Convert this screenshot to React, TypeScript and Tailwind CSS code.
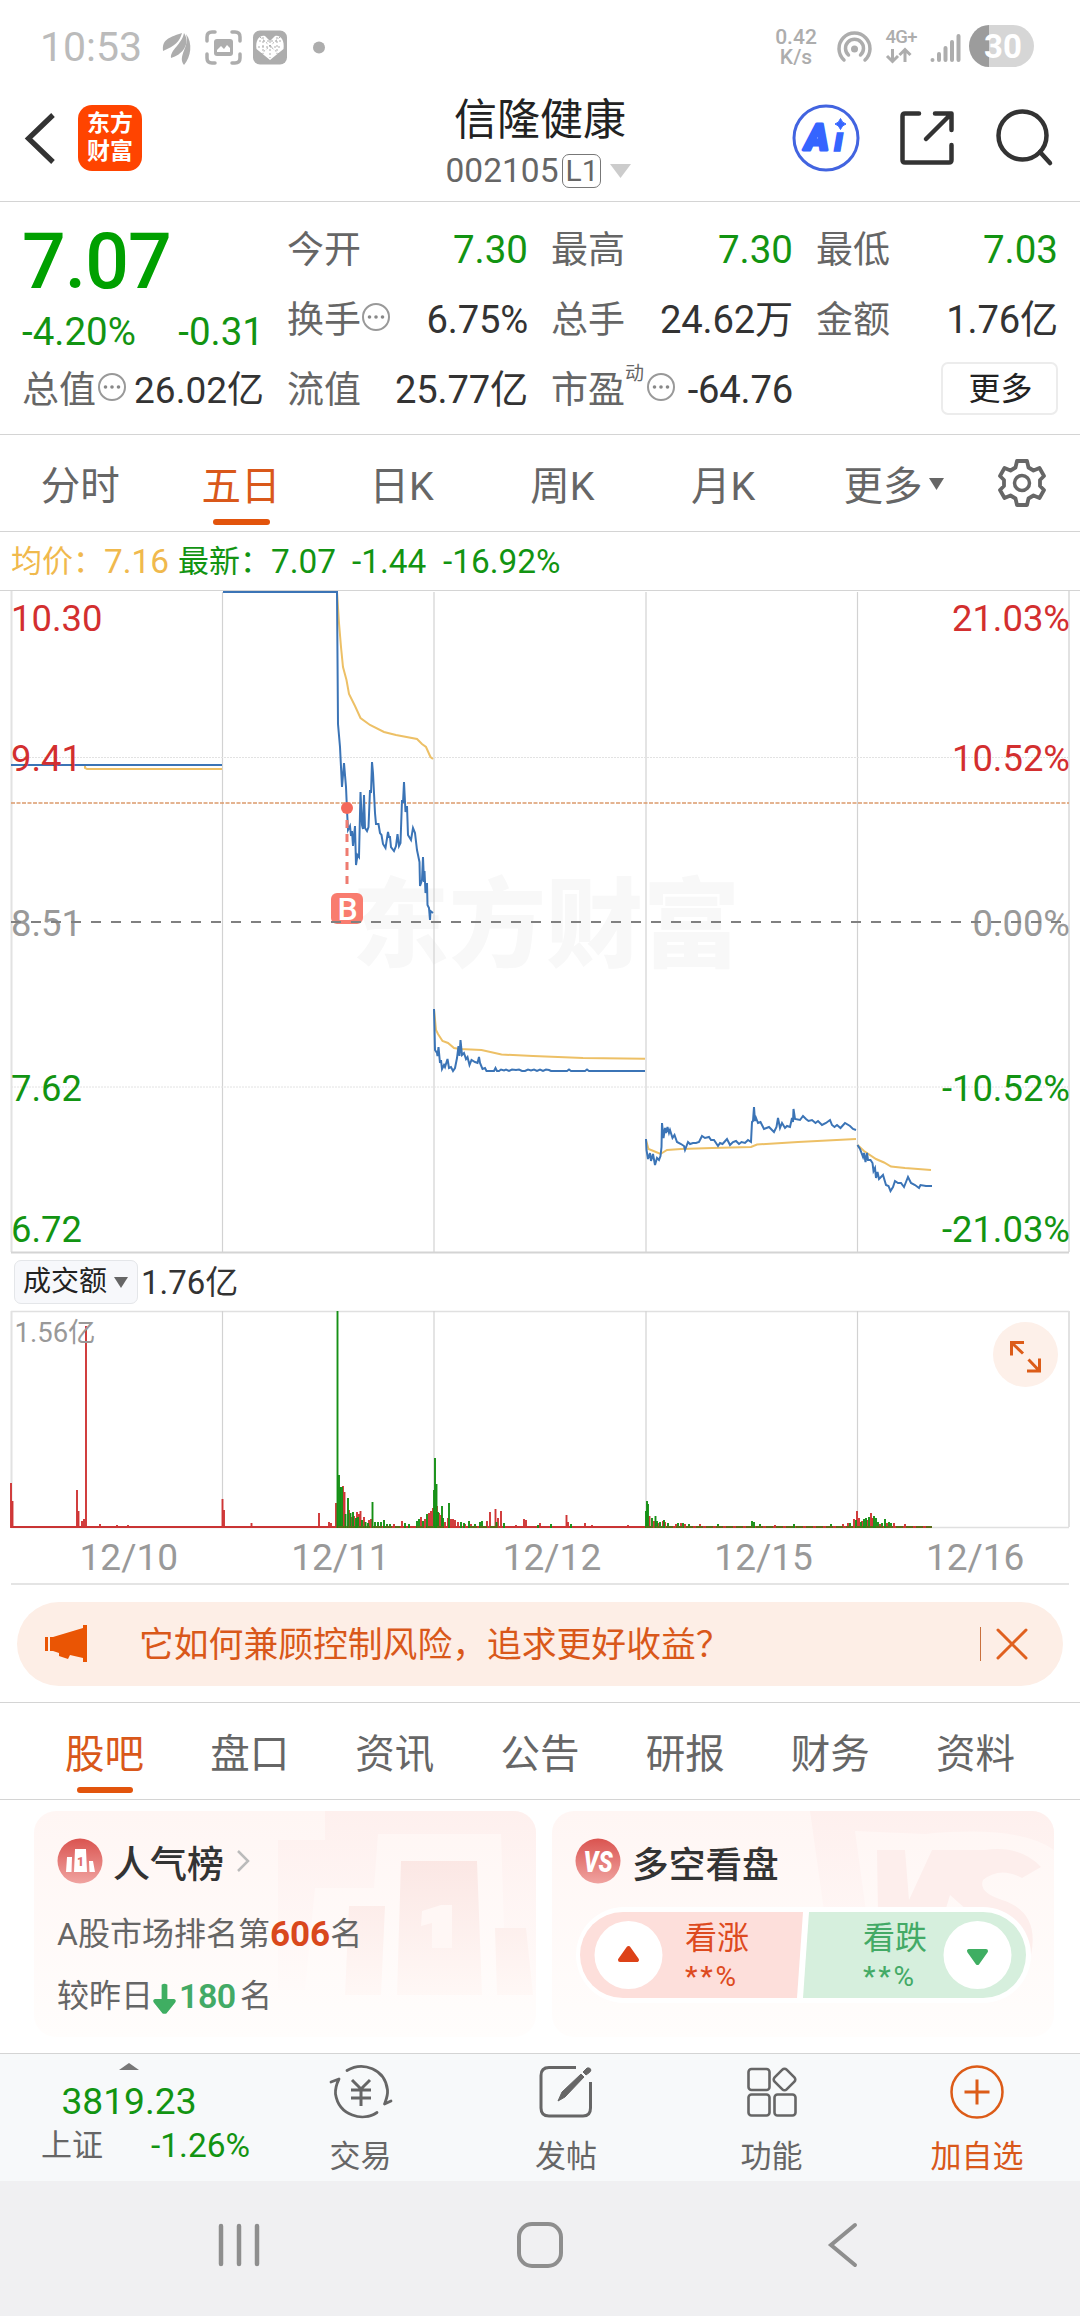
import { Fragment } from "react";

const priceLines = [
  "M11 765H222",
  "M223 592H337L338 724L340 747L342 787L344 763L346 787L347 810L348 830L350 826L351 836L352 831L353 846L355 826L356 865L357.5 855L359 857L360.5 792L362 825L363 829L364 795L365 828L367 831L368.5 827L370 790L371 793L372 762L373 773L375 813L376 824L378.5 824L380 833L381.5 835L383 844L385.5 848L388 832L389 837L390 837L391 847L394 851L396 846L397.5 834L399 846L400.5 843L402 800L403 803L404 782L405.5 812L407 806L408 835L411 840L413 828L415 833L417 850L419.5 862L420 886L422 880L423 857L424 882L424.5 871L425.5 893L427 883L427.5 905L429 908L430 920L430.5 911L433 913",
  "M434 1009L435 1050L437 1053L437.5 1056L438.5 1047L440 1063L441 1060L442 1069L444 1065L445 1067L447.5 1059L449 1068L451 1067L453 1071L455 1068L457 1058L458.5 1046L459.5 1056L460.5 1040L462 1055L464 1053L466 1059L467.5 1057L469.5 1065L471.5 1060L475 1062L477.5 1063L479 1057L480 1063L482.5 1069L485 1068L486.5 1071H494L495.5 1068L497 1071H499L501 1069.5L504 1070.5L506 1069.5L509 1071L512 1069.5L516 1070L519 1069.5L522 1071H525L528 1069.5L531 1070.5L534 1069.5L537 1071L540 1069.5L543 1071L546 1069.5L549 1070L551 1071H567L569 1069.5L571 1071H585L587 1069.5L589 1071H645",
  "M646 1139L646.5 1150L648 1159L650 1153L651 1161L653 1154L655 1165L657 1158L659 1160L660.5 1156L661.5 1147L662 1123L663.5 1138L665 1128L666 1133L667.5 1127L669 1133L670 1130L672.5 1138L674.5 1135L677 1142L681 1144L684 1146L685 1150L688 1142L690 1144L693 1143L696 1143L699 1142L702 1136L705 1138L709 1137L711 1140L714 1140L718 1146L720 1143L722.5 1144L727 1139L730 1145L733 1142L736 1141L739 1144L741.5 1142L745 1143L748 1140L751 1142L752 1122L753 1121L754 1107L755 1121L756 1118L758 1123L760.5 1122L764 1129L769 1127L774 1132L776.5 1127L778 1118L780 1128L782 1123L785 1128L787 1126L790 1127L792 1118L793 1122L793.5 1109L795 1119L800 1120L803 1116L806 1119L808.5 1121L812 1120L815.5 1123L818 1121L822 1125L826 1123L830 1120L832 1125L834.5 1127L837 1125L840.5 1128L845 1123L850 1126L853 1129L856 1130",
  "M857.5 1145L860 1149L863 1157L864 1153L865.5 1162L867 1153L868 1160L870.5 1160L872.5 1163L873.5 1171L875 1168L876 1178L877.5 1172L879 1179L881 1177L883 1175L886 1185L888.5 1186L890.5 1191L893 1187L895 1181L898 1183L901 1183L904 1187L906 1182L908 1177L911 1183L915 1185L919 1188L920.5 1185L926 1186H932",
];

const avgLines = [
  "M85 765V768L87 769H222",
  "M337 592L339 623L341 647L343 667L346.5 680L349 694L355 706L360.5 718L370 725L384 732L396 735L417 739L422 744L426 747L430.5 757L433 759",
  "M434 1009L436 1030L438 1034L442.5 1041L448 1043L454 1048L460 1049L481.5 1050L501.5 1054.5L533 1056L583 1058L645 1058.7",
  "M646 1140L648.5 1149L653.5 1151L660.5 1154L667 1150L681 1149L712 1148L751 1147L757 1144.5L798 1142L856 1139",
  "M857.5 1145L864 1151L876 1159L884 1162.5L891 1166.5L905 1168L931 1170",
];

// [x, bar height]
const redBars = [
  [11, 44], [12.5, 26], [77, 37], [78.5, 16], [82, 6], [84, 8], [86, 201], [100, 3], [117, 2], [128, 2],
  [222.5, 28], [224, 17], [251.5, 4], [319, 14], [329, 5], [331, 4], [336, 24], [343, 41], [344.5, 35],
  [349, 17], [352, 10], [354, 11], [357, 15], [359, 13], [360.5, 16], [364, 10], [369, 7], [371, 8],
  [394, 3], [402, 6], [421, 10], [425, 8], [429, 14], [431, 16], [433, 19], [437, 21], [439, 14], [441, 12],
  [445, 5], [448, 9], [451, 8], [453, 8], [455, 7], [458, 5], [465, 3], [471, 3], [487, 6], [490, 15],
  [495.5, 18], [498, 9], [501, 16], [516, 2], [524, 8], [526, 7], [540, 4], [566.5, 12], [568, 5], [585, 4],
  [592, 2], [628, 2], [649.5, 11], [654, 6], [658, 4], [663, 6], [665, 5], [676, 3], [681, 4], [685, 3],
  [700, 3], [775, 2], [843, 3], [848, 4], [854, 8], [857, 16], [859, 9], [862, 6], [867, 7], [871, 14],
  [872.5, 9], [880, 3], [887, 4], [894, 4], [905, 3],
];
const greenBars = [
  [337.5, 216], [339, 52], [340.5, 40], [342, 40], [345.5, 13], [348, 29], [350.5, 14], [353, 15], [356, 9],
  [358, 10], [362, 7], [365.5, 5], [368, 4], [372.5, 25], [375, 5], [378, 5], [381, 5], [384, 7], [387, 3],
  [390, 3], [405, 4], [409, 3], [417, 6], [419, 8], [423, 6], [427, 13], [434, 37], [435, 69], [436.5, 43],
  [438, 15], [442, 21], [443, 9], [449, 24], [461, 5], [464, 4], [469, 6], [475, 3], [480, 5], [482, 6],
  [496.5, 5], [504, 4], [538, 2], [551, 3], [571, 3], [646, 16], [647, 26], [648, 23], [652, 9], [655.5, 11],
  [657, 6], [660, 5], [664, 7], [668, 4], [678, 4], [683, 4], [689, 3], [718, 3], [752, 6], [754, 5],
  [760, 3], [794, 3], [831, 3], [850, 4], [856, 7], [861, 5], [864, 8], [866, 9], [869, 10], [874, 11],
  [876, 9], [878, 5], [882, 4], [885, 8], [889, 5], [891, 4],
];

const axisLabels = [
  { price: "10.30", pct: "21.03%", y: 631, fill: "#d32f2f" },
  { price: "9.41", pct: "10.52%", y: 771, fill: "#d32f2f" },
  { price: "8.51", pct: "0.00%", y: 936, fill: "#999999" },
  { price: "7.62", pct: "-10.52%", y: 1101, fill: "#129412" },
  { price: "6.72", pct: "-21.03%", y: 1242, fill: "#129412" },
];

const dates = ["12/10", "12/11", "12/12", "12/15", "12/16"];
const chartTabs = ["分时", "五日", "日K", "周K", "月K"];
const infoTabs = ["股吧", "盘口", "资讯", "公告", "研报", "财务", "资料"];
const gridX = [222.5, 434, 646, 857.5];

function MoreDot() {
  return (
    <svg width="28" height="28" viewBox="0 0 28 28" className="shrink-0">
      <circle cx="14" cy="14" r="13" fill="none" stroke="#999" strokeWidth="2" />
      <circle cx="7.5" cy="14" r="1.8" fill="#888" />
      <circle cx="14" cy="14" r="1.8" fill="#888" />
      <circle cx="20.5" cy="14" r="1.8" fill="#888" />
    </svg>
  );
}

function StatusBar() {
  return (
    <div className="flex h-[94px] items-center pl-[40px] text-[#adadad]">
      <span className="w-[119px] text-[41px] leading-none text-[#bbb]">10:53</span>
      <svg width="175" height="40" viewBox="159 27 175 40">
        <path d="M163 51C162 41 166 38 182 33C180 41 175 46 163 51Z" fill="#adadad" />
        <path d="M171 58C170 50 182 44 184 33C191 44 182 55 171 58Z" fill="#adadad" />
        <path d="M184 65C177 56 190 47 186 34C193 43 191 57 184 65Z" fill="#adadad" />
        <path d="M207 41V37Q207 32 212 32H215M232 32H235Q240 32 240 37V41M240 54V58Q240 63 235 63H232M215 63H212Q207 63 207 58V54" fill="none" stroke="#adadad" strokeWidth="3.5" strokeLinecap="round" />
        <rect x="214" y="39" width="19" height="17" rx="3" fill="#adadad" />
        <path d="M217 52V50L221 46L224 49L227 45L230 48V52Z" fill="#fff" />
        <rect x="253" y="30.5" width="34" height="34" rx="7" fill="#adadad" />
        <path d="M270 60L256.5 49C255 40 260 34.5 265 36L270 41L275 36C280 34.5 285 40 283.5 49Z" fill="#fff" />
        <path d="M259 41H281M258 47H282M263 37V54M270 41V58M277 37V54M260 37L279 54M280 37L261 54" stroke="#adadad" strokeWidth="1" strokeDasharray="2 2" fill="none" />
        <circle cx="319" cy="47.5" r="6" fill="#adadad" />
      </svg>
      <div className="ml-auto flex h-full items-center pr-[46px]">
        <div className="w-[52px] text-center text-[21px] leading-[20px] font-medium">
          0.42
          <br />
          K/s
        </div>
        <svg width="210" height="44" viewBox="824 26 210 44" className="ml-[2px]">
          <g fill="none" stroke="#adadad" strokeWidth="3.5" strokeLinecap="round">
            <path d="M844 61A15.500 15.500 0 1 1 865 61" />
            <path d="M848.5 56A9 9 0 1 1 860.5 56" />
          </g>
          <circle cx="854.5" cy="50" r="3.5" fill="#adadad" />
          <text x="885.5" y="44" fontSize="18.500" fontWeight="500" fill="#adadad" textLength="32">4G+</text>
          <path d="M892.5 50V62M887 57L892.5 62.5L898 57M905 63V51M899.5 56L905 50.5L910.5 56" fill="none" stroke="#adadad" strokeWidth="3" />
          <path d="M932.5 61V61M939 61V55M945.5 61V49M952 61V43M958.5 61V37" stroke="#adadad" strokeWidth="4" strokeLinecap="round" />
          <path d="M989 26H1013A21 21 0 0 1 1013 68H989Z" fill="#d6d6d6" />
          <path d="M989 26A20 21 0 0 0 989 68Z" fill="#9c9c9c" />
          <text x="1003" y="59" fontSize="33" fontWeight="700" fill="#fff" textAnchor="middle">30</text>
        </svg>
      </div>
    </div>
  );
}

function Header() {
  return (
    <div className="flex h-[108px] border-b border-[#d4d4d4]">
      <div className="flex w-[360px] pt-[11px]">
        <svg width="60" height="66" viewBox="0 105 60 66">
          <path d="M53 115L28.5 138.5L53 162" fill="none" stroke="#333" strokeWidth="5.2" />
        </svg>
        <div className="ml-[18px] flex h-[66px] w-[64px] flex-col items-center justify-center rounded-[14px] bg-[#ff4400] text-[23px] leading-[28px] font-bold text-white">
          <span>东方</span>
          <span>财富</span>
        </div>
      </div>
      <div className="flex w-[360px] flex-col items-center">
        <div className="flex h-[53px] items-center text-[43px] leading-none text-[#222]">信隆健康</div>
        <div className="flex h-[47px] items-center text-[33.5px] leading-none text-[#666]">
          <span>002105</span>
          <span className="ml-[4px] flex h-[34px] w-[39px] items-center justify-center rounded-[7px] border border-[#777] text-[30px]">L1</span>
          <svg width="21" height="14" viewBox="0 0 21 14" className="mr-[3px] ml-[9px]">
            <path d="M0 0H21L10.5 14Z" fill="#ccc" />
          </svg>
        </div>
      </div>
      <svg width="360" height="100" viewBox="720 94 360 100">
        <circle cx="826" cy="138" r="32" fill="none" stroke="#4264e0" strokeWidth="3" />
        <text x="805" y="149.5" fontSize="36" fontWeight="900" fontStyle="italic" fill="#3565ff" stroke="#3565ff" strokeWidth="3" strokeLinejoin="round">A</text>
        <text x="834" y="151" fontSize="34" fontWeight="900" fontStyle="italic" fill="#3565ff" stroke="#3565ff" strokeWidth="1.5">ı</text>
        <path d="M840.5 118.500Q842 123 846 124Q842 125 840.5 129.500Q839 125 835 124Q839 123 840.5 118.500Z" fill="#3565ff" stroke="#3565ff" strokeWidth="1" />
        <g fill="none" stroke="#333" strokeWidth="4.5" strokeLinecap="round" strokeLinejoin="round">
          <path d="M919 113.5H905Q902.5 113.5 902.5 116V160Q902.5 162.5 905 162.5H949Q951.5 162.5 951.5 160V145" />
          <path d="M935 113.5H951.5V130M951 114L926 139" />
          <circle cx="1022.5" cy="135.5" r="24" />
          <path d="M1040 152L1050 163" />
        </g>
      </svg>
    </div>
  );
}

type RowProps = {
  label: string;
  value: string;
  up?: boolean;
  dot?: boolean;
  sup?: string;
};

function Row({ label, value, up, dot, sup }: RowProps) {
  return (
    <div className="flex h-[70px] items-center whitespace-nowrap">
      <span className="text-[37px] leading-none text-[#666]">{label}</span>
      {sup && <span className="mb-[34px] w-[21px] text-[19px] leading-none text-[#666]">{sup}</span>}
      {dot && <span className="mb-[6px] ml-[1px]"><MoreDot /></span>}
      <span className={up ? "ml-auto text-[38.5px] leading-none text-[#129412]" : "ml-auto text-[38.2px] leading-none tracking-[-0.2px] text-[#333]"}>{value}</span>
    </div>
  );
}

function Quote() {
  return (
    <div className="flex h-[233px] justify-between border-b border-[#d4d4d4] pt-[13px] pr-[22px] pl-[22px]">
      <div className="w-[242px]">
        <div className="flex h-[94px] items-center text-[77px] leading-none font-medium tracking-[-1px] text-[#00a000]">7.07</div>
        <div className="flex h-[46px] items-center justify-between text-[38.5px] leading-none text-[#129412]">
          <span>-4.20%</span>
          <span>-0.31</span>
        </div>
        <div className="flex h-[70px] items-center whitespace-nowrap">
          <span className="text-[37px] leading-none text-[#666]">总值</span>
          <span className="mb-[6px] ml-[2px]"><MoreDot /></span>
          <span className="ml-auto text-[37px] leading-none text-[#333]">26.02亿</span>
        </div>
      </div>
      <div className="w-[241px]">
        <Row label="今开" value="7.30" up />
        <Row label="换手" value="6.75%" dot />
        <Row label="流值" value="25.77亿" />
      </div>
      <div className="w-[242px]">
        <Row label="最高" value="7.30" up />
        <Row label="总手" value="24.62万" />
        <Row label="市盈" value="-64.76" sup="动" dot />
      </div>
      <div className="w-[242px]">
        <Row label="最低" value="7.03" up />
        <Row label="金额" value="1.76亿" />
        <div className="flex h-[67px] items-center justify-end">
          <button className="h-[53px] w-[117px] rounded-[7px] border-2 border-[#ececec] pt-[1px] pl-[2px] text-[32px] leading-none text-[#222]">更多</button>
        </div>
      </div>
    </div>
  );
}

function ChartTabs() {
  return (
    <div className="flex h-[97px] border-b border-[#d4d4d4] text-[39.5px] leading-none text-[#666]">
      {chartTabs.map((tab, i) => (
        <div key={tab} className="flex w-[160.7px] flex-col items-center pt-[32px]">
          <span className={i == 1 ? "text-[#d9581a]" : ""}>{tab}</span>
          {i == 1 && <i className="mt-[12px] h-[6px] w-[57px] rounded-full bg-[#e2540c]" />}
        </div>
      ))}
      <div className="flex w-[151px] pt-[32px] pl-[40px]">
        <span>更多</span>
        <svg width="15" height="12" viewBox="0 0 15 12" className="mt-[11px] ml-[7px] shrink-0">
          <path d="M0 0H15L7.5 12Z" fill="#666" />
        </svg>
      </div>
      <svg width="60" height="60" viewBox="-30 -30 60 60" className="mt-[18px] ml-[38px]">
        <path
          d="M-5 -22H5L6.5 -15.5L11.5 -12.5L17.5 -15L22 -7L18 -3V3L22 7L17.5 15L11.5 12.5L6.5 15.5L5 22H-5L-6.5 15.5L-11.5 12.5L-17.5 15L-22 7L-18 3V-3L-22 -7L-17.5 -15L-11.5 -12.5L-6.5 -15.5Z"
          fill="none"
          stroke="#666"
          strokeWidth="3.8"
          strokeLinejoin="round"
        />
        <circle r="7.5" fill="none" stroke="#666" strokeWidth="3.5" />
      </svg>
    </div>
  );
}

function PriceLegend() {
  return (
    <div className="flex h-[59px] items-center border-b border-[#d4d4d4] pt-[1px] pl-[11px] text-[33.4px] leading-none text-[#129412]">
      <span className="text-[31px] text-[#f0b94d]">均价：</span>
      <span className="w-[74px] text-[#f0b94d]">7.16</span>
      <span className="text-[31px]">最新：</span>
      <span className="w-[81px]">7.07</span>
      <span className="w-[91px]">-1.44</span>
      <span>-16.92%</span>
    </div>
  );
}

function PriceChart() {
  return (
    <svg width="1080" height="663" viewBox="0 591 1080 663" className="block">
      <text x="352" y="959" fontSize="97" fontWeight="900" fill="#f8f8f8">东方财富</text>
      <path d="M11.5 591V1252M1069 591V1252" stroke="#e2e2e2" strokeWidth="2" />
      {gridX.map((x) => (
        <path key={x} d={`M${x} 592V1252`} stroke="#d2d2d2" strokeWidth="1.2" />
      ))}
      <path d="M11 1252.500H1069" stroke="#d4d4d4" strokeWidth="2" />
      <path d="M11 757.500H1069M11 1087H1069" stroke="#e2e2e2" strokeWidth="1" strokeDasharray="2 1" />
      <path d="M11 803H1069" stroke="#dc9a6c" strokeWidth="1.5" strokeDasharray="4 1.5" />
      {avgLines.map((d) => (
        <path key={d} d={d} fill="none" stroke="#edc066" strokeWidth="2" />
      ))}
      {priceLines.map((d) => (
        <path key={d} d={d} fill="none" stroke="#3b74b6" strokeWidth="2" />
      ))}
      <path d="M347 820V886" stroke="#ee7b70" strokeWidth="3" strokeDasharray="8 6" />
      <circle cx="347" cy="808" r="6" fill="#f4685b" />
      <rect x="331" y="893" width="32" height="31" rx="6" fill="#f97c6f" />
      <text x="347.5" y="919.5" fontSize="32" fontWeight="500" fill="#fff" textAnchor="middle">B</text>
      {axisLabels.map((l) => (
        <Fragment key={l.pct}>
          <text x="11" y={l.y} fontSize="36.4" fill={l.fill}>{l.price}</text>
          <text x="1070" y={l.y} fontSize="36.4" fill={l.fill} textAnchor="end">{l.pct}</text>
        </Fragment>
      ))}
      <path d="M11 922H1069" stroke="#808080" strokeWidth="2" strokeDasharray="10 10" />
    </svg>
  );
}

function VolumeChart() {
  return (
    <>
      <div className="flex h-[56px] items-center pl-[14px] leading-none">
        <div className="flex h-[44px] w-[124px] items-center rounded-[7px] border border-[#e4e6e9] bg-[#f7f8fb] pl-[8px] text-[28px] text-[#222]">
          成交额
          <svg width="14" height="11" viewBox="0 0 14 11" className="ml-[7px]">
            <path d="M0 0H14L7 11Z" fill="#666" />
          </svg>
        </div>
        <span className="ml-[3px] text-[33px] text-[#333]">1.76亿</span>
      </div>
      <svg width="1080" height="220" viewBox="0 1310 1080 220" className="block">
        <path d="M11 1311.500H1069M11 1527.500H1069" stroke="#e0e0e0" strokeWidth="1.5" />
        <path d="M11.5 1311V1527M1069 1311V1527" stroke="#e2e2e2" strokeWidth="2" />
        {gridX.map((x) => (
          <path key={x} d={`M${x} 1311V1527`} stroke="#d2d2d2" strokeWidth="1.2" />
        ))}
        <path d="M11 1527H932" stroke="#c93434" strokeWidth="2" />
        {redBars.map(([x, h]) => (
          <path key={x} d={`M${x} 1528V${1527 - h}`} stroke="#cf3535" strokeWidth="1.9" />
        ))}
        {greenBars.map(([x, h]) => (
          <path key={x} d={`M${x} 1528V${1527 - h}`} stroke="#159015" strokeWidth="1.9" />
        ))}
        <path d="M338 1527H370M375 1527H400M417 1527H445M470 1527H500M646 1527H932" stroke="#5a6a18" strokeWidth="2" strokeDasharray="7 3" />
        <text x="14.500" y="1342" fontSize="27.5" fill="#999">1.56亿</text>
        <circle cx="1025.5" cy="1354.5" r="32.5" fill="#fdf0e9" />
        <path d="M1011.500 1357V1344H1024M1012 1344.500L1023 1355M1039.500 1360V1372.500H1027M1039 1372L1028.500 1361" transform="translate(0 -1.5)" fill="none" stroke="#dc5c18" strokeWidth="3" />
      </svg>
      <div className="ml-[23px] flex h-[53px] w-[1058px] items-center pt-[2px] text-[37px] leading-none text-[#999]">
        {dates.map((d) => (
          <span key={d} className="flex-1 text-center">{d}</span>
        ))}
      </div>
      <div className="mx-[11px] h-[2px] bg-[#e4e4e4]" />
    </>
  );
}

function Banner() {
  return (
    <div className="mx-[17px] mt-[17px] flex h-[84px] items-center rounded-full bg-[#fdeee6] text-[#d9581a]">
      <svg width="42" height="38" viewBox="0 0 42 38" className="ml-[28px]">
        <path d="M0 12H3V26H0ZM5 12H8V26H5Z" fill="#ea5504" />
        <path d="M8 12L38 3V0H42V37H38V33L25 30L23 34L14 31V28L8 26Z" fill="#ea5504" />
      </svg>
      <span className="mt-[2px] ml-[52px] text-[34.8px] leading-none">它如何兼顾控制风险，追求更好收益？</span>
      <i className="ml-auto h-[34px] w-[1px] bg-[#c9703c]" />
      <svg width="32" height="32" viewBox="0 0 32 32" className="mr-[35px] ml-[15px]">
        <path d="M2 2L30 30M30 2L2 30" stroke="#e0601f" strokeWidth="3" strokeLinecap="round" />
      </svg>
    </div>
  );
}

function InfoTabs() {
  return (
    <div className="mt-[16px] flex h-[98px] border-y border-[#d4d4d4] px-[32px] text-[39.5px] leading-none text-[#666]">
      {infoTabs.map((tab, i) => (
        <div key={tab} className="flex flex-1 flex-col items-center pt-[32px]">
          <span className={i == 0 ? "text-[#d9581a]" : ""}>{tab}</span>
          {i == 0 && <i className="mt-[12px] h-[6px] w-[56px] rounded-full bg-[#e2540c]" />}
        </div>
      ))}
    </div>
  );
}

function RankCard() {
  return (
    <div className="relative h-[226px] w-[502px] overflow-hidden rounded-[22px] bg-gradient-to-b from-[#fff6f4] to-[#fffdfc] text-[#666]">
      <svg width="502" height="226" viewBox="34 1811 502 226" className="absolute inset-0">
        <defs>
          <linearGradient id="fade" x1="0" y1="1811" x2="0" y2="2000" gradientUnits="userSpaceOnUse">
            <stop offset="0" stopColor="#fef0ee" />
            <stop offset="1" stopColor="#fffbfa" />
          </linearGradient>
          <linearGradient id="podium" x1="0" y1="1860" x2="0" y2="1996" gradientUnits="userSpaceOnUse">
            <stop offset="0" stopColor="#fbe7e4" />
            <stop offset="1" stopColor="#fff8f6" />
          </linearGradient>
        </defs>
        <path d="M278 1840H325V1811H536V1990H506L501 1834H378L374 1888H315L305 1990H278Z" fill="url(#fade)" />
        <path d="M401 1861H477L482 1995H397ZM349 1906H385L381 1995H345ZM495 1928H526L533 1995H497Z" fill="url(#podium)" />
        <path d="M422 1911L441 1905H452V1948H432V1923L421 1926Z" fill="#fff7f5" />
      </svg>
      <div className="relative pl-[23px]">
        <div className="flex h-[100px] items-center">
          <svg width="46" height="46" viewBox="-23 -23 46 46">
            <defs>
              <linearGradient id="badge" x1="0" y1="0" x2="0" y2="1">
                <stop offset="0" stopColor="#da5450" />
                <stop offset="1" stopColor="#f0a3a0" />
              </linearGradient>
            </defs>
            <circle r="22.5" fill="url(#badge)" />
            <path d="M-13 -4H-8L-8.5 11H-14ZM-5 -12H6L7 11H-6ZM9 0H13L15 11H9.5Z" fill="#fff" />
            <text x="0.5" y="5" fontSize="12" fontWeight="900" fill="#e06f6b" textAnchor="middle">1</text>
          </svg>
          <span className="mt-[9px] ml-[10px] text-[37px] leading-none font-medium text-[#333]">人气榜</span>
          <svg width="14" height="24" viewBox="0 0 14 24" className="ml-[12px]">
            <path d="M2 2L12 12L2 22" fill="none" stroke="#bbb" strokeWidth="2.5" />
          </svg>
        </div>
        <div className="mt-[6px] flex h-[34px] items-center text-[32px] leading-none">
          A股市场排名第<b className="text-[35px] text-[#d9481c]">606</b>名
        </div>
        <div className="mt-[28px] flex h-[34px] items-center text-[32px] leading-none">
          较昨日
          <svg width="23" height="32" viewBox="0 0 24 32" className="mt-[5px]">
            <path d="M9 1Q12 -1 15 1V16H22Q25 17 23 20L14 31Q12 32 10 31L1 20Q-1 17 2 16H9Z" fill="#3fae62" />
          </svg>
          <b className="ml-[3px] w-[61px] text-[34px] font-semibold tracking-[-0.5px] text-[#43aa66]">180</b>名
        </div>
      </div>
    </div>
  );
}

function VoteCard() {
  return (
    <div className="relative h-[226px] w-[502px] overflow-hidden rounded-[22px] bg-gradient-to-b from-[#fff6f4] to-[#fffdfc]">
      <svg width="502" height="226" viewBox="552 1811 502 226" className="absolute inset-0">
        <path d="M810 1811H1054V1850Q1020 1825 925 1834L855 1831L866 1911H824Z" fill="url(#fade)" />
        <path d="M877 1850H905L909 1900L932 1850H976L985 1850Q1020 1845 1041 1867L1022 1878Q1000 1866 983 1880Q978 1892 1002 1900Q1040 1912 1031 1955H1018L950 1895L944 1915H878Z" fill="#fdeeec" />
      </svg>
      <div className="relative pl-[23px]">
        <div className="flex h-[94px] items-center pt-[5px]">
          <svg width="46" height="46" viewBox="-23 -23 46 46">
            <circle r="22.5" fill="url(#badge)" />
            <text x="0" y="11" fontSize="30" fontWeight="900" fontStyle="italic" fill="#fff" textAnchor="middle" textLength="29" lengthAdjust="spacingAndGlyphs">VS</text>
          </svg>
          <span className="mt-[11px] ml-[11px] text-[36.7px] leading-none font-medium text-[#333]">多空看盘</span>
        </div>
        <svg width="457" height="96" viewBox="575 1907 457 96" className="mt-[2px]">
          <rect x="576" y="1907" width="455" height="96" rx="48" fill="#fff" />
          <path d="M623 1912H803L797 1998H623A43 43 0 0 1 623 1912Z" fill="#fddfdb" />
          <path d="M809 1912H983A43 43 0 0 1 983 1998H803Z" fill="#d6efdd" />
          <circle cx="628.5" cy="1955" r="34" fill="#fff" />
          <circle cx="977.5" cy="1955" r="34" fill="#fff" />
          <path d="M628.5 1948L637 1960H620Z" fill="#dd4218" stroke="#dd4218" strokeWidth="4" strokeLinejoin="round" />
          <path d="M977.5 1963L969 1951H986Z" fill="#3fae62" stroke="#3fae62" strokeWidth="4" strokeLinejoin="round" />
          <text x="685" y="1949" fontSize="32" fill="#dd4a20">看涨</text>
          <text x="685" y="1986" fontSize="28" fill="#dd4a20" textLength="51"><tspan fontWeight="500">**</tspan>%</text>
          <text x="863" y="1949" fontSize="32" fill="#43aa66">看跌</text>
          <text x="863" y="1986" fontSize="28" fill="#43aa66" textLength="51"><tspan fontWeight="500">**</tspan>%</text>
        </svg>
      </div>
    </div>
  );
}

function BottomBar() {
  return (
    <div className="flex h-[128px] border-t border-[#d4d4d4] bg-[#f7f9fa] text-[31px] leading-none text-[#666]">
      <div className="flex w-[258px] flex-col items-center pt-[9px]">
        <svg width="20" height="7" viewBox="0 0 20 7">
          <path d="M0 7L10 0L20 7Z" fill="#777" />
        </svg>
        <span className="mt-[13px] text-[37.2px] text-[#129412]">3819.23</span>
        <div className="mt-[9px] flex w-[258px] items-center pl-[41px]">
          <span className="w-[110px]">上证</span>
          <span className="text-[33.5px] text-[#129412]">-1.26%</span>
        </div>
      </div>
      <div className="flex w-[205px] flex-col items-center pt-[7px]">
        <svg width="64" height="62" viewBox="-32 -31 64 62">
          <g fill="none" stroke="#666" strokeWidth="2.8" strokeLinecap="round" strokeLinejoin="round">
            <path d="M-14 -21.500C2 -31 24 -23 26.500 -2C27 4 25 8 23.500 12L30 9" />
            <path d="M16 20.500C2 30 -22 24 -25.500 2C-26 -5 -24 -9 -22 -13L-30 -10" />
          </g>
          <path d="M-9 -12L0 -3L9 -12M0 -3V14M-10 -2H10M-10 6H10" fill="none" stroke="#666" strokeWidth="3" />
        </svg>
        <span className="mt-[18px]">交易</span>
      </div>
      <div className="flex w-[206px] flex-col items-center pt-[7px]">
        <svg width="64" height="62" viewBox="-32 -31 64 62">
          <path d="M10 -24.500H-17Q-25 -24.500 -25 -16.500V16Q-25 24 -17 24H17Q24.500 24 24.500 16V-10" fill="none" stroke="#666" strokeWidth="3" />
          <path d="M-8 9L-4 0L15 -18L18 -15L-1 5ZM17 -20L21 -24Q24 -25 25 -22Q25 -20 20 -17Z" fill="#666" stroke="#666" strokeWidth="1" />
        </svg>
        <span className="mt-[18px]">发帖</span>
      </div>
      <div className="flex w-[205px] flex-col items-center pt-[7px]">
        <svg width="64" height="62" viewBox="-32 -31 64 62">
          <g fill="none" stroke="#666" strokeWidth="2.6">
            <rect x="-23.5" y="-23" width="21" height="21" rx="3" />
            <rect x="-23.5" y="2.5" width="21" height="21" rx="3" />
            <rect x="2.5" y="2.5" width="21" height="21" rx="3" />
            <rect x="-8.5" y="-8.5" width="17" height="17" rx="3" transform="translate(12.5 -12.5) rotate(45)" />
          </g>
        </svg>
        <span className="mt-[18px]">功能</span>
      </div>
      <div className="flex w-[206px] flex-col items-center pt-[7px] text-[#d9581a]">
        <svg width="64" height="62" viewBox="-32 -31 64 62">
          <circle r="25.5" fill="none" stroke="#dc5c18" strokeWidth="2.5" />
          <path d="M-12.5 0H12.5M0 -12.5V12.5" stroke="#dc5c18" strokeWidth="3" />
        </svg>
        <span className="mt-[18px]">加自选</span>
      </div>
    </div>
  );
}

function SystemNav() {
  return (
    <div className="flex h-[135px] items-center bg-[#f0f0f2] pb-[7px] pl-[217px]">
      <svg width="44" height="50" viewBox="0 0 44 50">
        <path d="M4 6V44M22 6V44M40 6V44" stroke="#8e8e8e" strokeWidth="4.5" strokeLinecap="round" />
      </svg>
      <svg width="50" height="50" viewBox="0 0 50 50" className="ml-[254px]">
        <rect x="4" y="4" width="42" height="42" rx="13" fill="none" stroke="#8e8e8e" strokeWidth="4" />
      </svg>
      <svg width="36" height="50" viewBox="0 0 36 50" className="ml-[260px]">
        <path d="M30 5L6 25L30 45" fill="none" stroke="#8e8e8e" strokeWidth="4" strokeLinecap="round" />
      </svg>
    </div>
  );
}

export default function App() {
  return (
    <div className="h-[2316px] w-[1080px] overflow-hidden bg-white font-['Roboto','Noto_Sans_CJK_SC',sans-serif]">
      <StatusBar />
      <Header />
      <Quote />
      <ChartTabs />
      <PriceLegend />
      <PriceChart />
      <VolumeChart />
      <Banner />
      <InfoTabs />
      <div className="flex h-[253px] justify-between px-[26px] pt-[11px] pl-[34px]">
        <RankCard />
        <VoteCard />
      </div>
      <BottomBar />
      <SystemNav />
    </div>
  );
}
